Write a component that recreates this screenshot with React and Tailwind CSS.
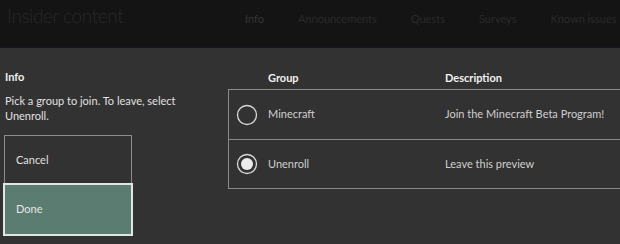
import React from "react";

function Radio({ checked }) {
  return (
    <svg width="22" height="22" viewBox="0 0 22 22" className="shrink-0">
      <circle cx="11" cy="11" r="9.5" fill="none" stroke="#d8d8d8" strokeWidth="1.3" />
      {checked && <circle cx="11" cy="11" r="6" fill="#ececec" />}
    </svg>
  );
}

export default function App() {
  const tabs = ["Info", "Announcements", "Quests", "Surveys", "Known issues"];
  return (
    <div
      className="w-[620px] h-[244px] overflow-hidden bg-[#323232] text-[#e6e6e6]"
      style={{ fontFamily: 'Lato, "Noto Sans", sans-serif' }}
    >
      <header className="h-[48px] bg-[#141414] flex items-start border-b border-[#17181f]">
        <div className="pl-[7px] pt-[2px] text-[19px] tracking-[-0.4px] font-light text-[#282828] leading-[28px] w-[245px] shrink-0">
          Insider content
        </div>
        <nav className="flex gap-[34px] pt-[9px] text-[11px] leading-[20px] whitespace-nowrap">
          {tabs.map((t, i) => (
            <span key={t} className={i === 0 ? "text-[#363636]" : "text-[#2a2a2a]"}>
              {t}
            </span>
          ))}
        </nav>
      </header>

      <main className="flex pt-[21px]">
        <section className="w-[135px] pl-[3px] shrink-0">
          <h2 className="pl-[2px] text-[11px] font-bold leading-[15px] text-[#f0f0f0]">Info</h2>
          <p className="pl-[2px] mt-[9px] text-[11px] leading-[15px] text-[#e0e0e0] w-[190px]">
            Pick a group to join. To leave, select Unenroll.
          </p>
          <div className="mt-[12px] flex flex-col">
            <button className="ml-[1px] w-[128px] h-[49px] border border-[#8c8c8c] text-left pl-[11px] pt-[2px] text-[11px] text-[#e0e0e0]">
              Cancel
            </button>
            <button className="-mt-[1px] w-[130px] h-[53px] border-2 border-[#e4e4e4] bg-[#5b7c71] text-left pl-[11px] text-[11px] text-[#e6e6e6]">
              Done
            </button>
          </div>
        </section>

        <section className="ml-[93px] w-[420px] shrink-0">
          <div className="flex h-[18px] items-center text-[11px] font-bold text-[#f0f0f0]">
            <span className="pl-[40px] w-[217px] shrink-0">Group</span>
            <span>Description</span>
          </div>
          <div className="mt-[2px] border border-[#8a8a8a] border-r-0 text-[11px] text-[#cfcfcf]">
            <div className="flex items-center h-[49px] pl-[7px]">
              <Radio checked={false} />
              <span className="pl-[10px] w-[187px] shrink-0">Minecraft</span>
              <span>Join the Minecraft Beta Program!</span>
            </div>
            <div className="border-t border-[#8a8a8a] flex items-center h-[49px] pl-[7px]">
              <Radio checked={true} />
              <span className="pl-[10px] w-[187px] shrink-0">Unenroll</span>
              <span>Leave this preview</span>
            </div>
          </div>
        </section>
      </main>
    </div>
  );
}
